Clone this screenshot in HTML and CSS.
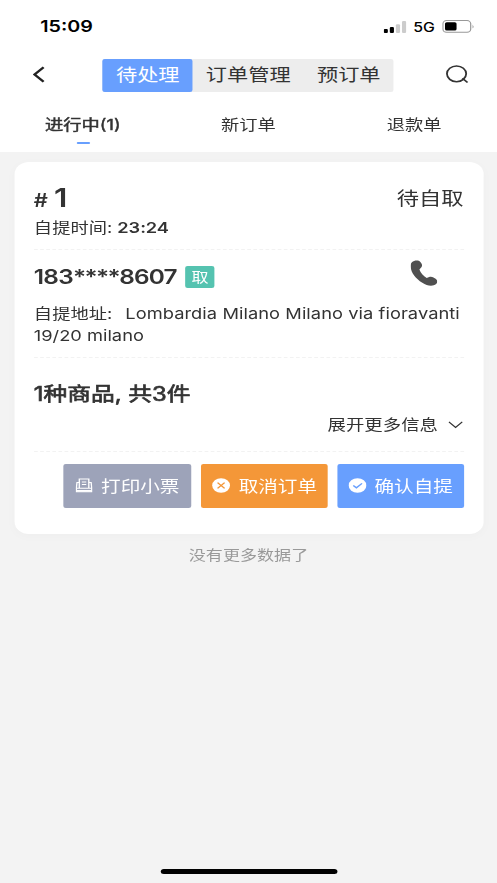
FILE: index.html
```html
<!DOCTYPE html>
<html lang="zh-CN">
<head>
<meta charset="utf-8">
<title>订单</title>
<link rel="stylesheet" href="styles.css">
</head>
<body>
<div class="screen">
  <header class="top">
    <div class="status">
      <span class="time">15:09</span>
      <svg class="signal" width="19" height="12" viewBox="0 0 19 12"><rect x="0" y="8" width="3.4" height="4" rx="1"/><rect x="5" y="6" width="3.4" height="6" rx="1"/><g fill="#ccc"><rect x="10" y="3.2" width="3.4" height="8.8" rx="1"/><rect x="15" y="0" width="3.4" height="12" rx="1"/></g></svg>
      <span class="net">5G</span>
      <svg class="battery" width="27" height="13" viewBox="0 0 27 13"><rect x=".6" y=".6" width="22.8" height="11.6" rx="3" fill="none" stroke="#999"/><rect x="2.3" y="2.2" width="9.5" height="8.4" rx="1.5"/><path d="M25 4.5q1.3 2 0 4z" fill="#888"/></svg>
    </div>
    <nav class="nav">
      <svg class="back" width="10" height="17" viewBox="0 0 10 17" fill="none" stroke="#222" stroke-width="2.1"><path d="M8.8 1.2 1.4 8.5l7.4 7.3"/></svg>
      <div class="segments"><span class="seg active">待处理</span><span class="seg mid">订单管理</span><span class="seg">预订单</span></div>
      <svg class="search" width="19" height="19" viewBox="0 0 19 19" fill="none" stroke="#333" stroke-width="1.5"><circle cx="8.8" cy="8.8" r="7.9"/><path d="m13.6 13.2 4.2 4.4"/></svg>
    </nav>
    <div class="tabs"><span class="tab current">进行中(1)</span><span class="tab">新订单</span><span class="tab">退款单</span></div>
  </header>
  <main class="card">
    <section class="summary">
      <div class="row number"><span><span class="hash">#</span><span class="one">1</span></span><span class="state">待自取</span></div>
      <div class="pickup">自提时间: <b>23:24</b></div>
    </section>
    <section class="contact">
      <div class="row person"><span class="phone">183<span class="mask">****</span>8607</span><span class="badge">取</span>
        <svg class="call" width="22" height="27" viewBox="0 0 22 27"><path fill="#505050" d="M1 2.5C3.3.1 6.6 0 8.1 2.1c1.2 1.6 1.9 3.6 1 5L7.3 9.4c1 3.5 3.2 6.5 6 8.6l2-1c2-.8 4 .4 5.6 2 1.5 1.5 1.3 3.8.1 5-2.7 2.8-7.3 2-11.3-1.2C4.2 18.5.5 12.7.2 7.2.1 5.2.2 3.5 1 2.5Z"/></svg>
      </div>
      <div class="address"><div class="line first"><span>自提地址:</span><span class="latin">Lombardia Milano Milano via fioravanti</span></div><div class="line latin">19/20 milano</div></div>
    </section>
    <section class="goods">
      <div class="count">1种商品, 共3件</div>
      <div class="more">展开更多信息<svg width="12" height="8" viewBox="0 0 12 8" fill="none" stroke="#333" stroke-width="1.1"><path d="m.5 .8 5.5 5.7L11.5.8"/></svg></div>
    </section>
    <div class="actions">
      <div class="btn print"><svg width="14" height="15" viewBox="0 0 14 15" fill="none" stroke="#fff" stroke-width="1.1"><path d="M3.1 10V1h7.8v9M5.2 4h3.6M5.2 6.5h3.6M2.8 4.5H1.2L.7 9.7v4h12.6v-4l-.5-5.2h-1.6M.7 10.2h12.6"/><path d="M.7 12.9h12.6" stroke-width="1.7"/></svg>打印小票</div>
      <div class="btn cancel"><svg width="15" height="15" viewBox="0 0 15 15"><circle cx="7.5" cy="7.5" r="7.3" fill="#fff"/><path d="m4.6 4.6 5.8 5.8m0-5.8-5.8 5.8" stroke="#f49738" stroke-width="1.3"/></svg>取消订单</div>
      <div class="btn confirm"><svg width="15" height="15" viewBox="0 0 15 15"><circle cx="7.5" cy="7.5" r="7.3" fill="#fff"/><path d="m4 7.4 2.6 2.4 4.6-4.4" fill="none" stroke="#689ffe" stroke-width="1.3"/></svg>确认自提</div>
    </div>
  </main>
  <p class="end">没有更多数据了</p>
  <div class="home"></div>
</div>
</body>
</html>
```

FILE: styles.css
```css
* { box-sizing: border-box; }
body { margin: 0; width: 497px; height: 883px; overflow: hidden; background: #f3f3f3; }
.screen {
  width: 408px; height: 883px; display: flex; flex-direction: column;
  transform: scaleX(1.218137); transform-origin: 0 0;
  font-family: Inter, "Noto Sans CJK SC", sans-serif; font-size: 15px; color: #333;
  background: #f3f3f3; white-space: nowrap;
}
svg { display: block; flex: none; }
.top { height: 151.5px; background: #fff; }
.status { height: 52px; display: flex; align-items: center; padding: 0 18px 0 33px; color: #000; }
.time { font-size: 16.2px; font-weight: 600; margin-right: auto; }
.signal { margin-right: 5px; margin-top: 2px; }
.net { font-size: 13px; font-weight: 500; margin-right: 6px; margin-top: 1px; }
.nav { height: 45px; display: flex; align-items: center; padding: 0 23px 0 27px; }
.segments { width: 239px; height: 33px; margin: 1px 0 0 47.3px; display: flex; background: #ededed; border-radius: 2px; font-size: 17.4px; line-height: 32px; text-align: center; }
.seg { width: 74px; }
.seg.mid { width: 91px; }
.active { background: #689ffe; color: #fff; border-radius: 2px; }
.search { margin-left: auto; }
.tabs { height: 54.5px; display: grid; grid-template-columns: repeat(3, 1fr); text-align: center; line-height: 55px; }
.tab { display: flex; flex-direction: column; align-items: center; height: 54px; }
.current { -webkit-text-stroke: .45px #333; }
.current::after { content: ""; width: 11px; height: 2px; margin-top: -10px; border-radius: 1px; background: #689ffe; }
.card { width: 385px; height: 372px; margin: 10.5px 0 0 11.5px; padding: 0 16px 0 16.3px; background: #fff; border-radius: 12px; box-shadow: 0 2px 10px rgba(0,0,0,.025); }
.row { display: flex; align-items: center; }
.summary { height: 88px; padding-top: 19px; border-bottom: 1px dashed #f2f2f2; }
.number { height: 32px; justify-content: space-between; }
.hash { font-size: 18px; font-weight: 600; margin-right: 5px; }
.one { font-size: 26px; font-weight: 600; }
.state { font-size: 18.3px; }
.pickup { line-height: 29px; }
.pickup b { font-weight: 600; letter-spacing: -.1px; }
.contact { height: 108px; border-bottom: 1px dashed #f2f2f2; }
.person { height: 53px; }
.phone { font-size: 20px; font-weight: 600; letter-spacing: -.65px; }
.mask { letter-spacing: -1.3px; }
.badge { width: 24px; height: 22px; margin-left: 7px; border-radius: 2px; background: #55c3b0; color: #fff; font-size: 14px; line-height: 21px; text-align: center; }
.call { margin: -6px 21.3px 0 auto; }
.line { height: 22px; line-height: 22px; }
.first { display: flex; justify-content: space-between; padding-right: 3px; }
.first .latin { letter-spacing: .05px; }
.goods { height: 94px; padding-top: 20px; border-bottom: 1px dashed #f2f2f2; }
.count { font-size: 19.5px; line-height: 32px; -webkit-text-stroke: .65px #333; }
.more { display: flex; justify-content: flex-end; align-items: center; gap: 8px; line-height: 29px; font-size: 15.1px; padding-right: 1px; }
.actions { display: flex; justify-content: flex-end; gap: 8.7px; padding-top: 12px; }
.btn { width: 103.3px; height: 43.5px; display: flex; align-items: center; justify-content: center; gap: 6.5px; border-radius: 2px; color: #fff; font-size: 16.1px; line-height: 44px; }
.print { width: 104.3px; background: #9da3b9; padding-left: 1px; }
.cancel { background: #f49738; padding-left: 1px; }
.confirm { background: #689ffe; }
.end { margin: 10px 0 0; text-align: center; font-size: 14px; line-height: 22px; color: #999; }
.home { width: 145.3px; height: 5px; margin: auto auto 9px 131.5px; border-radius: 3px; background: #000; }
```
